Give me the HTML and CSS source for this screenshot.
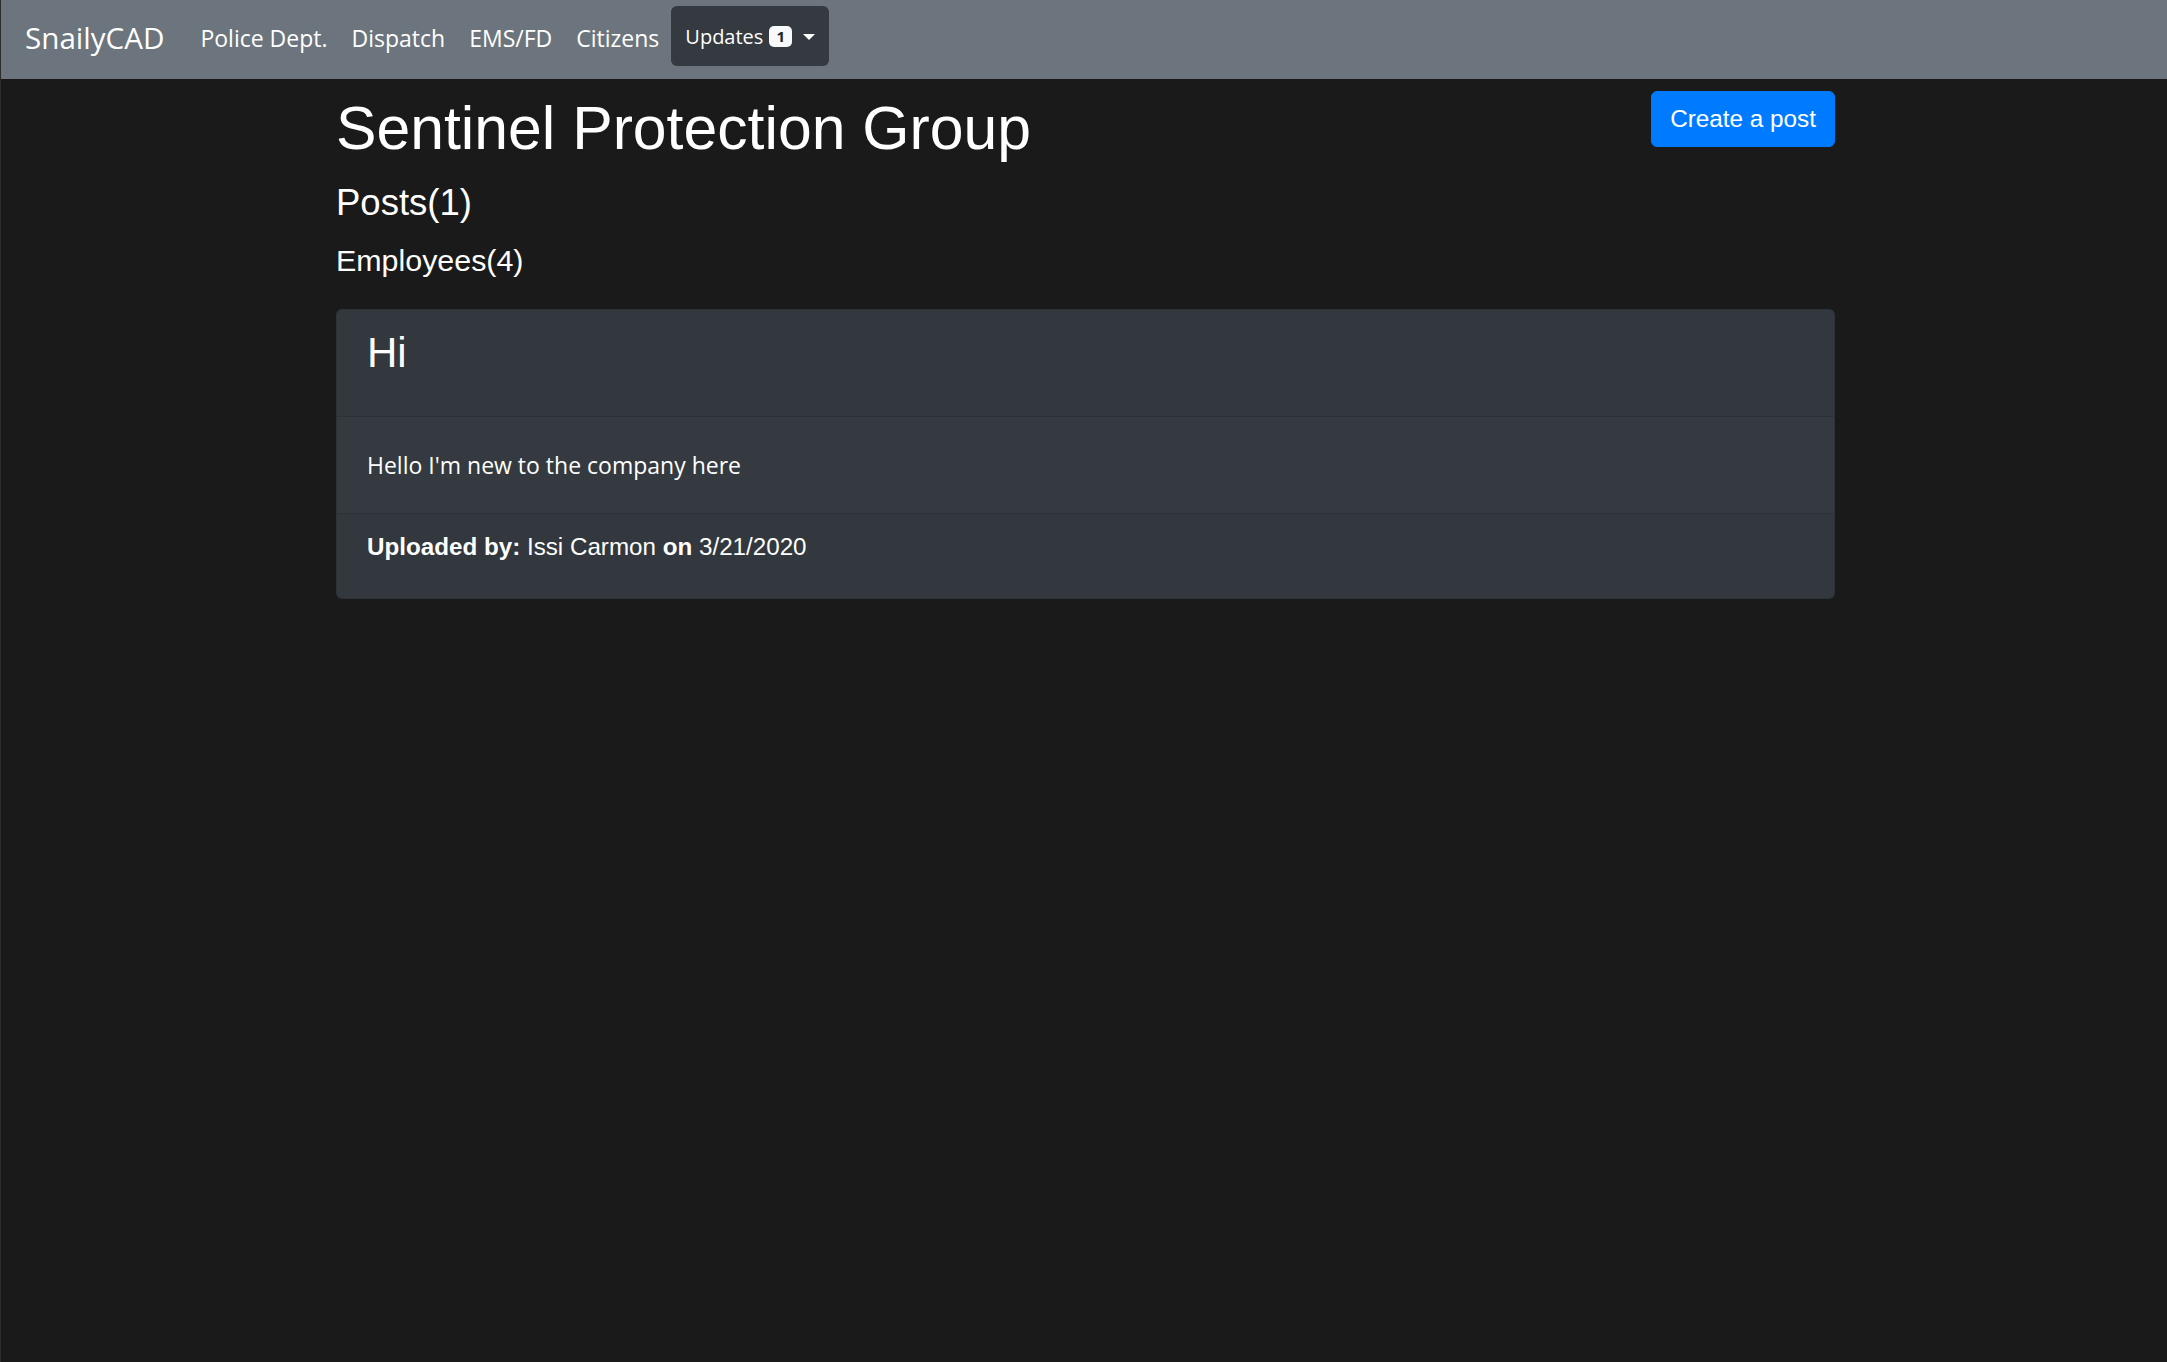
FILE: index.html
```html
<!DOCTYPE html>
<html lang="en">
<head>
<meta charset="utf-8">
<title>SnailyCAD - Sentinel Protection Group</title>
<link rel="stylesheet" href="styles.css">
</head>
<body>
<nav class="navbar">
  <a class="brand" href="#">SnailyCAD</a>
  <ul class="nav">
    <li><a class="nav-link" href="#">Police Dept.</a></li>
    <li><a class="nav-link" href="#">Dispatch</a></li>
    <li><a class="nav-link" href="#">EMS/FD</a></li>
    <li><a class="nav-link" href="#">Citizens</a></li>
    <li class="dropdown">
      <button class="dropdown-toggle" type="button">Updates <span class="badge">1</span><span class="caret"></span></button>
    </li>
  </ul>
</nav>
<main class="container">
  <div class="header-row">
    <h1 class="title">Sentinel Protection Group</h1>
    <button class="btn-primary" type="button">Create a post</button>
  </div>
  <h4 class="posts">Posts(1)</h4>
  <h5 class="employees">Employees(4)</h5>
  <div class="card">
    <div class="card-header">
      <h3 class="card-title">Hi</h3>
    </div>
    <div class="card-body">
      <p class="card-text">Hello I'm new to the company here</p>
    </div>
    <div class="card-footer">
      <span class="meta"><strong>Uploaded by:</strong> Issi Carmon <strong>on</strong> 3/21/2020</span>
    </div>
  </div>
</main>
</body>
</html>
```
FILE: styles.css
```css
* { box-sizing: border-box; }

html, body {
  height: 100%;
}

body {
  margin: 0;
  background: #1a1a1a;
  color: #fff;
  font-family: "Open Sans", "Noto Sans", sans-serif;
  font-size: 24px;
  line-height: 1.5;
  border-left: 1px solid #2c2c2c;
}

/* Navbar */
.navbar {
  display: flex;
  align-items: center;
  height: 79px;
  padding: 0 24px;
  background: #6c757d;
}

.brand {
  font-size: 29.6px;
  color: #fff;
  text-decoration: none;
  margin-right: 24px;
  margin-top: -3px;
}

.nav {
  display: flex;
  align-items: center;
  list-style: none;
  margin: 0;
  padding: 0;
  height: 100%;
}

.nav-link {
  display: block;
  padding: 0 12px;
  font-size: 23px;
  color: #fff;
  text-decoration: none;
  margin-top: -3px;
}

.dropdown {
  align-self: flex-start;
  margin-top: 6px;
}

.dropdown-toggle {
  display: flex;
  align-items: center;
  height: 60px;
  padding: 0 14px;
  background: #343a40;
  border: 0;
  border-radius: 6px;
  color: #fff;
  font-family: "Open Sans", "Noto Sans", sans-serif;
  font-size: 20px;
}

.badge {
  display: inline-block;
  margin-left: 6px;
  padding: 3px 7px;
  background: #f8f9fa;
  color: #212529;
  border-radius: 5px;
  font-size: 15px;
  font-weight: 700;
  line-height: 1;
}

.caret {
  display: inline-block;
  margin-left: 11px;
  margin-top: 1px;
  border-top: 6px solid #fff;
  border-left: 6px solid transparent;
  border-right: 6px solid transparent;
}

/* Main */
.container {
  width: 1499px;
  margin: 0 0 0 335px;
  font-family: "Liberation Sans", Arial, sans-serif;
}

.header-row {
  display: flex;
  justify-content: space-between;
  align-items: flex-start;
  padding-top: 12px;
}

.title {
  margin: 1px 0 17px 0;
  font-size: 60.7px;
  font-weight: 400;
  line-height: 72px;
}

.btn-primary {
  padding: 9px 18px;
  background: #007bff;
  border: 1px solid #007bff;
  border-radius: 6px;
  color: #fff;
  font-family: "Liberation Sans", Arial, sans-serif;
  font-size: 24.3px;
  line-height: 36px;
}

.posts {
  margin: 0 0 18px 0;
  font-size: 36.5px;
  font-weight: 400;
  line-height: 43px;
}

.employees {
  margin: 0 0 31px 0;
  font-size: 30.4px;
  font-weight: 400;
  line-height: 36px;
}

.card {
  background: #343a40;
  border: 1px solid rgba(0, 0, 0, 0.125);
  border-radius: 6px;
  overflow: hidden;
}

.card-header {
  padding: 18px 30px 26px;
  background: rgba(0, 0, 0, 0.03);
  border-bottom: 1px solid rgba(0, 0, 0, 0.125);
}

.card-title {
  margin: 0 0 12px 0;
  font-size: 42px;
  font-weight: 400;
  line-height: 50px;
}

.card-body {
  padding: 30px;
}

.card-text {
  margin: 0;
  font-family: "Open Sans", "Noto Sans", sans-serif;
  font-size: 23px;
  line-height: 36px;
}

.card-footer {
  padding: 15px 30px 33px;
  background: rgba(0, 0, 0, 0.03);
  border-top: 1px solid rgba(0, 0, 0, 0.125);
  font-size: 24.2px;
  line-height: 36px;
}

.card-footer strong {
  font-weight: 700;
}
```
